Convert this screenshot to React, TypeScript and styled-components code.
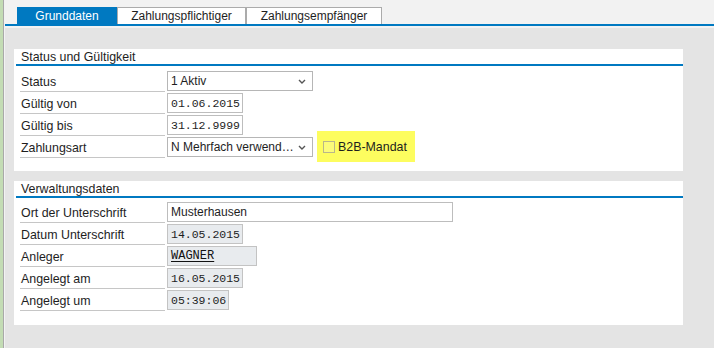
import React from "react";
import styled, { createGlobalStyle } from "styled-components";

const Global = createGlobalStyle`
  html, body { margin: 0; padding: 0; background: #f2f2f2; }
  body { font-family: "Liberation Sans", Arial, sans-serif; font-size: 12px; color: #1e1e1e; }
`;

const Page = styled.div`
  display: flex;
  width: 714px;
  height: 348px;
  overflow: hidden;
`;

const LeftStrip = styled.div`
  width: 3px;
  background: #c3dcb4;
  border-right: 1px solid #a9a9a9;
  margin-right: 1px;
  flex: none;
`;

const Main = styled.div`
  flex: 1;
  display: flex;
  flex-direction: column;
  background: #f2f2f2;
`;

const TabBar = styled.div`
  display: flex;
  align-items: flex-end;
  height: 24px;
  padding-left: 12px;
  border-bottom: 2px solid #0079c1;
`;

const Tab = styled.div<{ $active?: boolean; $w: number }>`
  box-sizing: border-box;
  height: 17px;
  width: ${(p) => p.$w}px;
  display: flex;
  align-items: center;
  justify-content: center;
  font-size: 12px;
  background: ${(p) => (p.$active ? "#0079c1" : "#ffffff")};
  color: ${(p) => (p.$active ? "#ffffff" : "#1e1e1e")};
  border: 1px solid ${(p) => (p.$active ? "#0079c1" : "#ababab")};
  border-bottom: none;
`;

const Content = styled.div`
  flex: 1;
  margin-top: 2px;
  background: #e4e4e4;
  padding: 21px 0 0 9px;
  display: flex;
  flex-direction: column;
  gap: 10px;
`;

const Panel = styled.section<{ $pb: number }>`
  width: 667px;
  background: #ffffff;
  padding: 0 0 ${(p) => p.$pb}px 2px;
`;

const PanelHeader = styled.div`
  height: 15px;
  line-height: 16px;
  padding-left: 5px;
  border-bottom: 2px solid #0079c1;
  font-size: 12.4px;
  color: #1e1e1e;
`;

const Form = styled.div<{ $pt: number }>`
  display: flex;
  flex-direction: column;
  padding: ${(p) => p.$pt}px 0 0 4px;
`;

const Row = styled.div`
  display: flex;
  align-items: flex-start;
  height: 22px;
`;

const Label = styled.div`
  box-sizing: border-box;
  width: 145px;
  height: 22px;
  margin-right: 2px;
  padding: 5px 0 0 1px;
  border-bottom: 1px solid #c6c6c6;
  font-size: 12.4px;
  color: #1e1e1e;
  flex: none;
`;

const Field = styled.div<{ $w: number; $disabled?: boolean; $mono?: boolean }>`
  box-sizing: border-box;
  width: ${(p) => p.$w}px;
  height: 20px;
  margin-top: 1px;
  padding: 0 3px;
  display: flex;
  align-items: center;
  background: ${(p) => (p.$disabled ? "#e8ebee" : "#ffffff")};
  border: 1px solid ${(p) => (p.$disabled ? "#c3c3c3" : "#bdbdbd")};
  font-family: ${(p) => (p.$mono ? '"Liberation Mono", "Courier New", monospace' : '"Liberation Sans", Arial, sans-serif')};
  font-size: ${(p) => (p.$mono ? "11.5px" : "12px")};
  color: #1e1e1e;
  white-space: nowrap;
  flex: none;
`;

const Select = styled(Field)`
  justify-content: space-between;
  padding-right: 6px;
  border-color: #b6b6b6;
`;

const Underlined = styled.span`
  text-decoration: underline;
  text-underline-offset: 2px;
  font-size: 12px;
  color: #111;
`;

const Highlight = styled.div`
  height: 31px;
  margin-top: -5px;
  margin-left: 4px;
  padding: 0 8px 0 6px;
  display: flex;
  align-items: center;
  gap: 3px;
  background: #fdfd5f;
  font-size: 12.4px;
  color: #1e1e1e;
`;

const CheckBox = styled.span`
  box-sizing: border-box;
  width: 12px;
  height: 12px;
  border: 1px solid #b9b68a;
  background: #fbfb7a;
`;

const Chevron = () => (
  <svg width="8" height="5" viewBox="0 0 8 5">
    <path d="M1 1 L4 4 L7 1" fill="none" stroke="#555" strokeWidth="1.4" />
  </svg>
);

export default function App() {
  return (
    <Page>
      <Global />
      <LeftStrip />
      <Main>
        <TabBar>
          <Tab $active $w={100}>Grunddaten</Tab>
          <Tab $w={129}>Zahlungspflichtiger</Tab>
          <Tab $w={136}>Zahlungsempfänger</Tab>
        </TabBar>
        <Content>
          <Panel $pb={13}>
            <PanelHeader>Status und Gültigkeit</PanelHeader>
            <Form $pt={4}>
              <Row>
                <Label>Status</Label>
                <Select $w={146}>
                  <span>1 Aktiv</span>
                  <Chevron />
                </Select>
              </Row>
              <Row>
                <Label>Gültig von</Label>
                <Field $w={76} $mono>01.06.2015</Field>
              </Row>
              <Row>
                <Label>Gültig bis</Label>
                <Field $w={76} $mono>31.12.9999</Field>
              </Row>
              <Row>
                <Label>Zahlungsart</Label>
                <Select $w={146}>
                  <span>N Mehrfach verwend…</span>
                  <Chevron />
                </Select>
                <Highlight>
                  <CheckBox />
                  <span>B2B-Mandat</span>
                </Highlight>
              </Row>
            </Form>
          </Panel>
          <Panel $pb={14}>
            <PanelHeader>Verwaltungsdaten</PanelHeader>
            <Form $pt={3}>
              <Row>
                <Label>Ort der Unterschrift</Label>
                <Field $w={286}>Musterhausen</Field>
              </Row>
              <Row>
                <Label>Datum Unterschrift</Label>
                <Field $w={76} $mono $disabled>14.05.2015</Field>
              </Row>
              <Row>
                <Label>Anleger</Label>
                <Field $w={90} $mono $disabled>
                  <Underlined>WAGNER</Underlined>
                </Field>
              </Row>
              <Row>
                <Label>Angelegt am</Label>
                <Field $w={76} $mono $disabled>16.05.2015</Field>
              </Row>
              <Row>
                <Label>Angelegt um</Label>
                <Field $w={62} $mono $disabled>05:39:06</Field>
              </Row>
            </Form>
          </Panel>
        </Content>
      </Main>
    </Page>
  );
}
